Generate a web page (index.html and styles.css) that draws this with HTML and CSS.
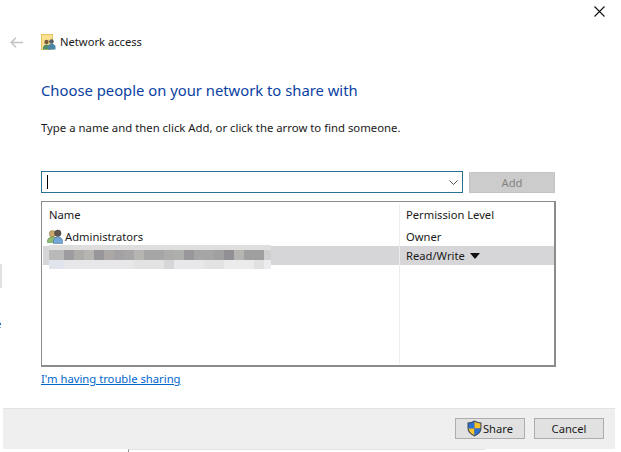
FILE: index.html
```html
<!DOCTYPE html>
<html lang="en">
<head>
<meta charset="utf-8">
<title>Network access</title>
<link rel="stylesheet" href="styles.css">
</head>
<body>
<div class="window">
  <div class="closebar">
    <svg class="close" width="11" height="11" viewBox="0 0 11 11"><path d="M.5.5l10 10M10.5.5l-10 10" stroke="#111" stroke-width="1.1" fill="none"/></svg>
  </div>
  <div class="titlebar">
    <svg class="back" width="13" height="11" viewBox="0 0 13 11"><path d="M6 .8L1.2 5.5 6 10.2M1.4 5.5H13" stroke="#c4c4c4" stroke-width="1.5" fill="none"/></svg>
    <svg class="wizard" width="15" height="16" viewBox="0 0 15 16">
      <rect x=".5" y=".5" width="11" height="15" fill="#fbe08f" stroke="#e3c463"/>
      <circle cx="5.500" cy="8" r="2.200" fill="#7a5a3e"/>
      <path d="M2 15.500v-2.500q1-2.500 3.500-2.500t3.500 2.500v2.500z" fill="#4f8d6c"/>
      <circle cx="10.500" cy="7.500" r="2.300" fill="#56606a"/>
      <path d="M7 15.500v-3.500q1-2.500 3.500-2.500t4 2.500v3.500z" fill="#4a86a8"/>
    </svg>
    <span class="wizard-title">Network access</span>
  </div>
  <main class="content">
    <h1 class="heading">Choose people on your network to share with</h1>
    <p class="instructions">Type a name and then click Add, or click the arrow to find someone.</p>
    <div class="picker">
      <div class="combo">
        <span class="caret"></span>
        <svg class="chevron" width="9" height="5" viewBox="0 0 9 5"><path d="M.4.400L4.500 4.500 8.600.400" stroke="#555" stroke-width="1" fill="none"/></svg>
      </div>
      <button class="btn btn-add" type="button" disabled>Add</button>
    </div>
    <div class="list">
      <div class="row row-head">
        <span class="col-name">Name</span>
        <span class="col-perm">Permission Level</span>
      </div>
      <div class="row row-admin">
        <span class="col-name">
          <svg class="users" width="17" height="15" viewBox="0 0 17 15">
            <circle cx="5.500" cy="4.800" r="3.200" fill="#c9a66b" stroke="#8f8052" stroke-width=".6"/>
            <path d="M.5 13.500v-2.500q1-3 5-3t5 3v2.500z" fill="#8cbb6f" stroke="#5f8c4c" stroke-width=".6"/>
            <circle cx="10.800" cy="4.300" r="3.200" fill="#5f5650" stroke="#3f3b3a" stroke-width=".6"/>
            <path d="M6.500 14.500v-3.500q1-3.200 4.300-3.200t4.700 3.200v3.500z" fill="#74a7d6" stroke="#4b7ba6" stroke-width=".6"/>
          </svg>Administrators</span>
        <span class="col-perm">Owner</span>
      </div>
      <div class="row row-selected">
        <span class="col-name"></span>
        <span class="col-perm">Read/Write<span class="arrow"></span></span>
      </div>
      <div class="redacted"><div class="blur-top"></div><div class="blur-mid"></div><div class="blur-bot"></div></div>
      <div class="divider"></div>
    </div>
    <a class="help" href="#">I'm having trouble sharing</a>
  </main>
  <footer class="footer">
    <button class="btn" type="button">
      <svg class="shield" width="15" height="17" viewBox="0 0 15 17">
        <path d="M7.500.500Q11 2.500 14.500 2.500V8Q14.500 13.500 7.500 16.500.5 13.500.5 8V2.500Q4 2.500 7.500.500z" fill="#3f4d5e"/>
        <path d="M7.500 1.800V8.500H1.600V3.500Q5 3.400 7.500 1.800z" fill="#2a70d8"/>
        <path d="M7.500 1.800Q10 3.400 13.400 3.500V8.500H7.500z" fill="#f6c52d"/>
        <path d="M1.600 8.500H7.500V15.200Q2.300 13 1.600 8.500z" fill="#f6c52d"/>
        <path d="M7.500 8.500H13.400Q12.700 13 7.500 15.200z" fill="#2a70d8"/>
      </svg>Share</button>
    <button class="btn" type="button">Cancel</button>
  </footer>
  <div class="scrap-left"></div>
  <span class="scrap-letter">e</span>
  <div class="scrap-bottom"></div>
</div>
</body>
</html>
```
FILE: styles.css
```css
* { box-sizing: border-box; }
html, body { margin: 0; height: 100%; }
body { background: #fff; font-family: "Noto Sans", sans-serif; font-size: 11.200px; color: #1a1a1a; overflow: hidden; }
.window { position: relative; width: 621px; height: 452px; display: flex; flex-direction: column; }
.closebar { height: 30px; display: flex; justify-content: flex-end; padding: 6px 16px 0 0; }
.close { display: block; }
.titlebar { height: 24px; display: flex; align-items: center; padding-left: 10px; }
.back { margin-right: 18px; }
.wizard { margin-right: 4px; }
.wizard-title { font-size: 11.200px; line-height: 16px; }
.content { flex: 1; padding: 23px 65px 0 41px; display: flex; flex-direction: column; align-items: stretch; }
.heading { margin: 0; padding-top: 2px; font-size: 14.800px; font-weight: 400; color: #0b3fa3; line-height: 22px; height: 24px; }
.instructions { margin: 19px 0 0; font-size: 11.350px; line-height: 16px; height: 16px; }
.picker { margin-top: 35px; display: flex; align-items: flex-start; gap: 6px; }
.combo { width: 422px; height: 22px; border: 1px solid #2a7294; display: flex; align-items: center; justify-content: space-between; padding: 0 4px 0 5px; }
.caret { width: 1px; height: 14px; background: #000; }
.chevron { display: block; }
.btn { width: 86px; height: 21px; border: 1px solid #adadad; background: #e1e1e1; font: inherit; color: #1a1a1a; padding: 0; display: inline-flex; align-items: center; justify-content: center; }
.btn-add { margin-top: 1px; background: #cccccc; border-color: #c4c4c4; color: #838383; }
.list { position: relative; margin-top: 8px; width: 515px; height: 166px; border: 2px solid #8c8c8c; border-width: 1px 2px 2px 1px; padding: 1px 0 0 1px; }
.row { display: flex; align-items: center; height: 19px; }
.row-head { height: 23px; }
.row-admin { height: 20px; }
.row-selected { background: #d6d6d9; }
.col-name { width: 356px; padding-left: 6px; display: flex; align-items: center; }
.col-perm { padding-left: 7px; display: flex; align-items: center; }
.users { margin-right: 1px; margin-left: -2px; }
.arrow { margin-left: 5px; width: 0; height: 0; border: 5px solid transparent; border-top: 6px solid #111; border-bottom: 0; }
.divider { position: absolute; left: 357px; top: 2px; bottom: 1px; width: 1px; background: #ececec; }
.redacted { position: absolute; left: 7px; top: 43px; width: 222px; height: 24px; }
.blur-top { height: 5px; background: #dededf; }
.blur-mid { height: 10px; background: linear-gradient(90deg, #b9b9b9 0 15px, #9d9b9f 15px 25px, #aeaca9 25px 35px, #b7b5b2 35px 45px, #98969a 45px 55px, #aaa7a4 55px 65px, #a3a1a3 65px 75px, #a7a5a5 75px 85px, #b5b4b0 85px 95px, #a6a6a6 95px 115px, #adacaa 115px 125px, #adafad 125px 135px, #99979b 135px 145px, #a6a5a5 145px 165px, #a1a0a0 165px 175px, #929095 175px 185px, #b5b4b0 185px 195px, #a09f9f 195px 215px, #cfcfcf 215px 222px); }
.blur-bot { height: 9px; background: linear-gradient(90deg, #e1e4ec 0 15px, #e7e7e9 15px 85px, #e3e3e4 85px 115px, #d7d7d9 115px 125px, #e8e8ea 125px 155px, #e3e3e4 155px 175px, #ebebec 175px 205px, #e1e1e2 205px 215px, #ececee 215px 222px); }
.help { margin-top: 4px; align-self: flex-start; font-size: 11.250px; line-height: 16px; color: #0066cc; text-decoration: underline; }
.footer { height: 41px; margin: 0 6px 3px 3px; border-top: 1px solid #e3e3e3; background: #f0eff0; display: flex; justify-content: flex-end; align-items: center; gap: 9px; padding: 0 11px 1px 0; }
.footer .btn { width: 70px; height: 21px; }
.shield { margin-right: 1px; }
.scrap-left { position: absolute; left: 0; top: 264px; width: 2px; height: 24px; background: #e1e1e1; }
.scrap-letter { position: absolute; left: -5px; top: 316px; font-size: 11.200px; line-height: 16px; color: #1a1a1a; }
.scrap-bottom { position: absolute; left: 128px; top: 449px; width: 357px; height: 3px; border-left: 1px solid #8c8c8c; border-top: 1px solid #e3e3e3; }
```
